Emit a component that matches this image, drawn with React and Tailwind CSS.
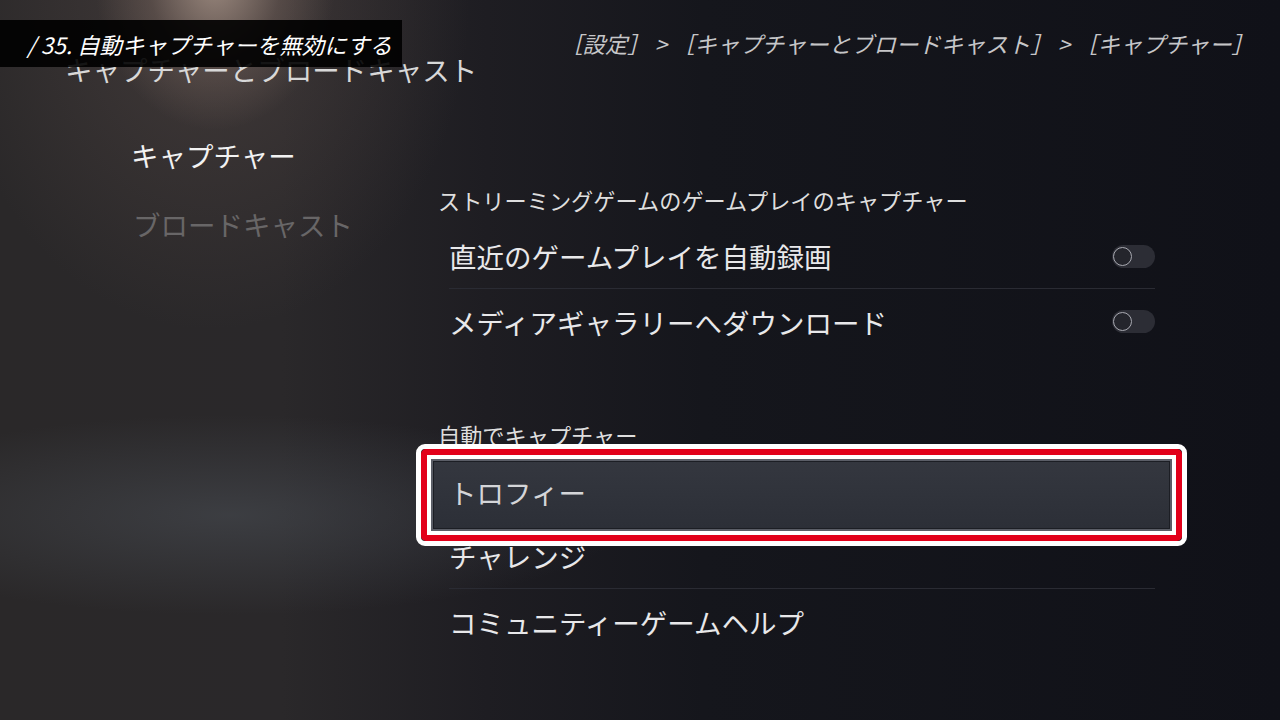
import React from "react";

function Toggle() {
  return (
    <div className="w-[43px] h-[23px] rounded-full bg-[#2c2d35] flex items-center pl-[1px] shrink-0">
      <div className="w-[19px] h-[19px] rounded-full border-[1.5px] border-[#a9aab2] bg-[#24252c]" />
    </div>
  );
}

function Row({ label, toggle, border }) {
  return (
    <div
      className={
        "h-[65px] flex items-center justify-between " +
        (border ? "border-b border-[#2a2b33]" : "")
      }
    >
      <span className="text-[27.5px] leading-[30px] text-[#e8e8ea]">{label}</span>
      {toggle ? <Toggle /> : null}
    </div>
  );
}

export default function App() {
  return (
    <div className="relative w-[1280px] h-[720px] overflow-hidden font-['Noto_Sans_CJK_JP','Noto_Sans',sans-serif] bg-[image:radial-gradient(ellipse_120px_150px_at_215px_-20px,rgba(170,150,138,0.85),rgba(125,106,98,0.4)_55%,transparent),radial-gradient(ellipse_260px_330px_at_210px_0px,rgba(95,80,76,0.45),transparent),radial-gradient(ellipse_400px_100px_at_230px_515px,rgba(78,83,90,0.5),transparent),linear-gradient(90deg,#2a2829_0%,#2a282a_22%,#1e1d22_38%,#15161c_55%,#101118_100%)]">
      {/* Page header */}
      <div className="pt-[54px] pl-[65px] text-[27.5px] leading-[30px] text-[#d8d8d8]">
        キャプチャーとブロードキャスト
      </div>

      <div className="flex mt-[56px]">
        {/* Left nav */}
        <div className="w-[438px] pl-[131px] flex flex-col gap-[39px] shrink-0">
          <div className="text-[27.5px] leading-[30px] text-[#f2f2f2]">キャプチャー</div>
          <div className="text-[27.5px] leading-[30px] text-[#686667] pl-[2px]">ブロードキャスト</div>
        </div>

        {/* Right content */}
        <div className="flex flex-col pt-[48px]">
          <div className="text-[22.2px] leading-[24px] text-[#dedede]">
            ストリーミングゲームのゲームプレイのキャプチャー
          </div>
          <div className="ml-[11px] w-[706px] mt-[12px] flex flex-col">
            <Row label="直近のゲームプレイを自動録画" toggle border />
            <Row label="メディアギャラリーへダウンロード" toggle />
          </div>

          <div className="mt-[69px] text-[22.2px] leading-[24px] text-[#dedede]">
            自動でキャプチャー
          </div>
          <div className="ml-[11px] w-[706px] mt-[12px] flex flex-col">
            <div className="relative h-[65px] flex items-center">
              <div className="absolute left-[-33px] right-[-32px] top-[-15px] bottom-[-22px] border-[5px] border-white rounded-[9px]">
                <div className="h-full border-[6px] border-[#e2001a] rounded-[5px]">
                  <div className="h-full border-[4px] border-white">
                    <div className="h-full border-2 border-[#5b5e67] bg-[linear-gradient(180deg,#34373f,#2c2f37)] shadow-[inset_0_0_0_1px_#1c1e24]" />
                  </div>
                </div>
              </div>
              <span className="relative text-[27.5px] leading-[30px] text-[#d4d5d8]">トロフィー</span>
            </div>
            <Row label="チャレンジ" border />
            <Row label="コミュニティーゲームヘルプ" />
          </div>
        </div>
      </div>

      {/* Annotation overlays */}
      <div className="absolute top-[20px] left-0 w-[402px] h-[47px] bg-black/90 flex items-center pl-[27px]">
        <span className="italic text-[22.5px] leading-[28px] text-white">
          <span className="mr-[5px]">/</span>35. 自動キャプチャーを無効にする
        </span>
      </div>
      <div className="absolute top-[29px] right-[26px] italic text-[22.4px] leading-[28px] text-[#c6c6c8]">
        ［設定］ &gt; ［キャプチャーとブロードキャスト］ &gt; ［キャプチャー］
      </div>
    </div>
  );
}
